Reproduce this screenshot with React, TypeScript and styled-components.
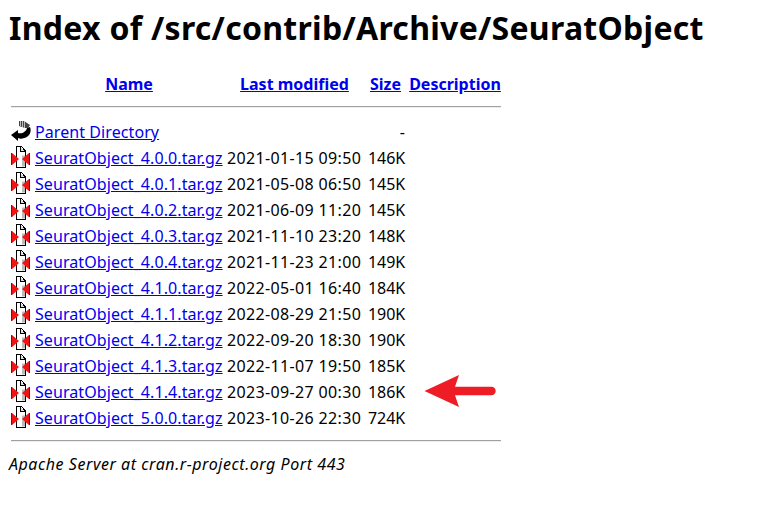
import React from "react";
import styled, { createGlobalStyle } from "styled-components";

const Global = createGlobalStyle`
  html, body { margin: 0; background: #fff; }
  body { margin: 8px; font-family: "Noto Sans", "Open Sans", sans-serif; color: #000; font-size: 16px; }
  a { color: #0000ee; }
`;
const Title = styled.h1`
  font-size: 32px; line-height: 40px; font-weight: 700; margin: 0 0 22px 1px; letter-spacing: 0.28px;
`;
const Table = styled.table`
  border-spacing: 2px; border-collapse: separate; line-height: 22px; width: 496px; table-layout: fixed;
`;
const Th = styled.th`
  padding: 1px; font-weight: 700; text-align: center; height: 22px;
`;
const RuleCell = styled.th`
  padding: 1px;
`;
const Td = styled.td<{ $right?: boolean }>`
  padding: 1px; text-align: ${(p) => (p.$right ? "right" : "left")}; white-space: nowrap; height: 22px; letter-spacing: 0.08px;
`;
const DateCell = styled(Td)`
  letter-spacing: 0.35px;
`;
const SizeCell = styled(Td)`
  letter-spacing: -0.1px;
`;
const IconCell = styled.td`
  padding: 0 1px 2px; height: 22px; vertical-align: top; line-height: 0;
`;
const Rule = styled.hr`
  height: 0; border: 0; border-top: 1px solid #a0a0a0; border-bottom: 1px solid #eee; margin: 7px 0 9px;
`;
const Footer = styled.address`
  font-style: italic; font-size: 16px; line-height: 20px; letter-spacing: 0.55px; margin-left: 1px;
`;
const Arrow = styled.svg`
  position: absolute; left: 424px; top: 375px;
`;

const ArchiveIcon = () => (
  <svg width="20" height="22" viewBox="0 0 20 22">
    <path d="M5.500 .5h5l3.500 4v17h-8.500z" fill="#fff" stroke="#000" shapeRendering="crispEdges" />
    <path d="M9.500 .5v5h4.500" fill="#ddd" stroke="#000" shapeRendering="crispEdges" />
    <path d="M11 9.500h3v11h-3z" fill="#bbb" />
    <path d="M0 7h1l7 6-7 6H0zM19 7h-1l-7 6 7 6h1z" fill="#f01414" />
    <path d="M.5 7v12M18.500 7v12" stroke="#a00000" />
  </svg>
);
const BackIcon = () => (
  <svg width="20" height="22" viewBox="0 0 20 22">
    <path d="M0 15 7 10V13C11 14 15 12 16 8L19 7C21 12 18 17 13 18 11 19 9 19 7 18V21Z" fill="#000" />
    <path d="M8 1H13L19 5 17 8H14L8 6Z" fill="#444" />
    <path d="M9.500 1v5M11.500 1v6M13.500 1v7" stroke="#ddd" strokeWidth=".8" />
  </svg>
);

const rows: [string, string, string][] = [
  ["4.0.0", "2021-01-15 09:50", "146K"],
  ["4.0.1", "2021-05-08 06:50", "145K"],
  ["4.0.2", "2021-06-09 11:20", "145K"],
  ["4.0.3", "2021-11-10 23:20", "148K"],
  ["4.0.4", "2021-11-23 21:00", "149K"],
  ["4.1.0", "2022-05-01 16:40", "184K"],
  ["4.1.1", "2022-08-29 21:50", "190K"],
  ["4.1.2", "2022-09-20 18:30", "190K"],
  ["4.1.3", "2022-11-07 19:50", "185K"],
  ["4.1.4", "2023-09-27 00:30", "186K"],
  ["5.0.0", "2023-10-26 22:30", "724K"],
];

export default function App() {
  return (
    <>
      <Global />
      <Title>Index of /src/contrib/Archive/SeuratObject</Title>
      <Table>
        <colgroup>
          <col style={{ width: 22 }} />
          <col style={{ width: 190 }} />
          <col style={{ width: 137 }} />
          <col style={{ width: 41 }} />
          <col />
        </colgroup>
        <tbody>
          <tr>
            <Th />
            <Th><a href="#">Name</a></Th>
            <Th><a href="#">Last modified</a></Th>
            <Th><a href="#">Size</a></Th>
            <Th><a href="#">Description</a></Th>
          </tr>
          <tr><RuleCell colSpan={5}><Rule /></RuleCell></tr>
          <tr>
            <IconCell><BackIcon /></IconCell>
            <Td><a href="#">Parent Directory</a></Td>
            <Td />
            <Td $right>-</Td>
            <Td />
          </tr>
          {rows.map(([v, d, s]) => (
            <tr key={v}>
              <IconCell><ArchiveIcon /></IconCell>
              <Td><a href="#">SeuratObject_{v}.tar.gz</a></Td>
              <DateCell>{d}</DateCell>
              <SizeCell $right>{s}</SizeCell>
              <Td />
            </tr>
          ))}
          <tr><RuleCell colSpan={5}><Rule /></RuleCell></tr>
        </tbody>
      </Table>
      <Footer>Apache Server at cran.r-project.org Port 443</Footer>
      <Arrow width="73" height="32" viewBox="0 0 73 32">
        <path d="M0.500 16 L35 0 L31 11.800 H67.500 a4.200 4.200 0 0 1 0 8.400 H31 L35 32 Z" fill="#ee1c25" />
      </Arrow>
    </>
  );
}
